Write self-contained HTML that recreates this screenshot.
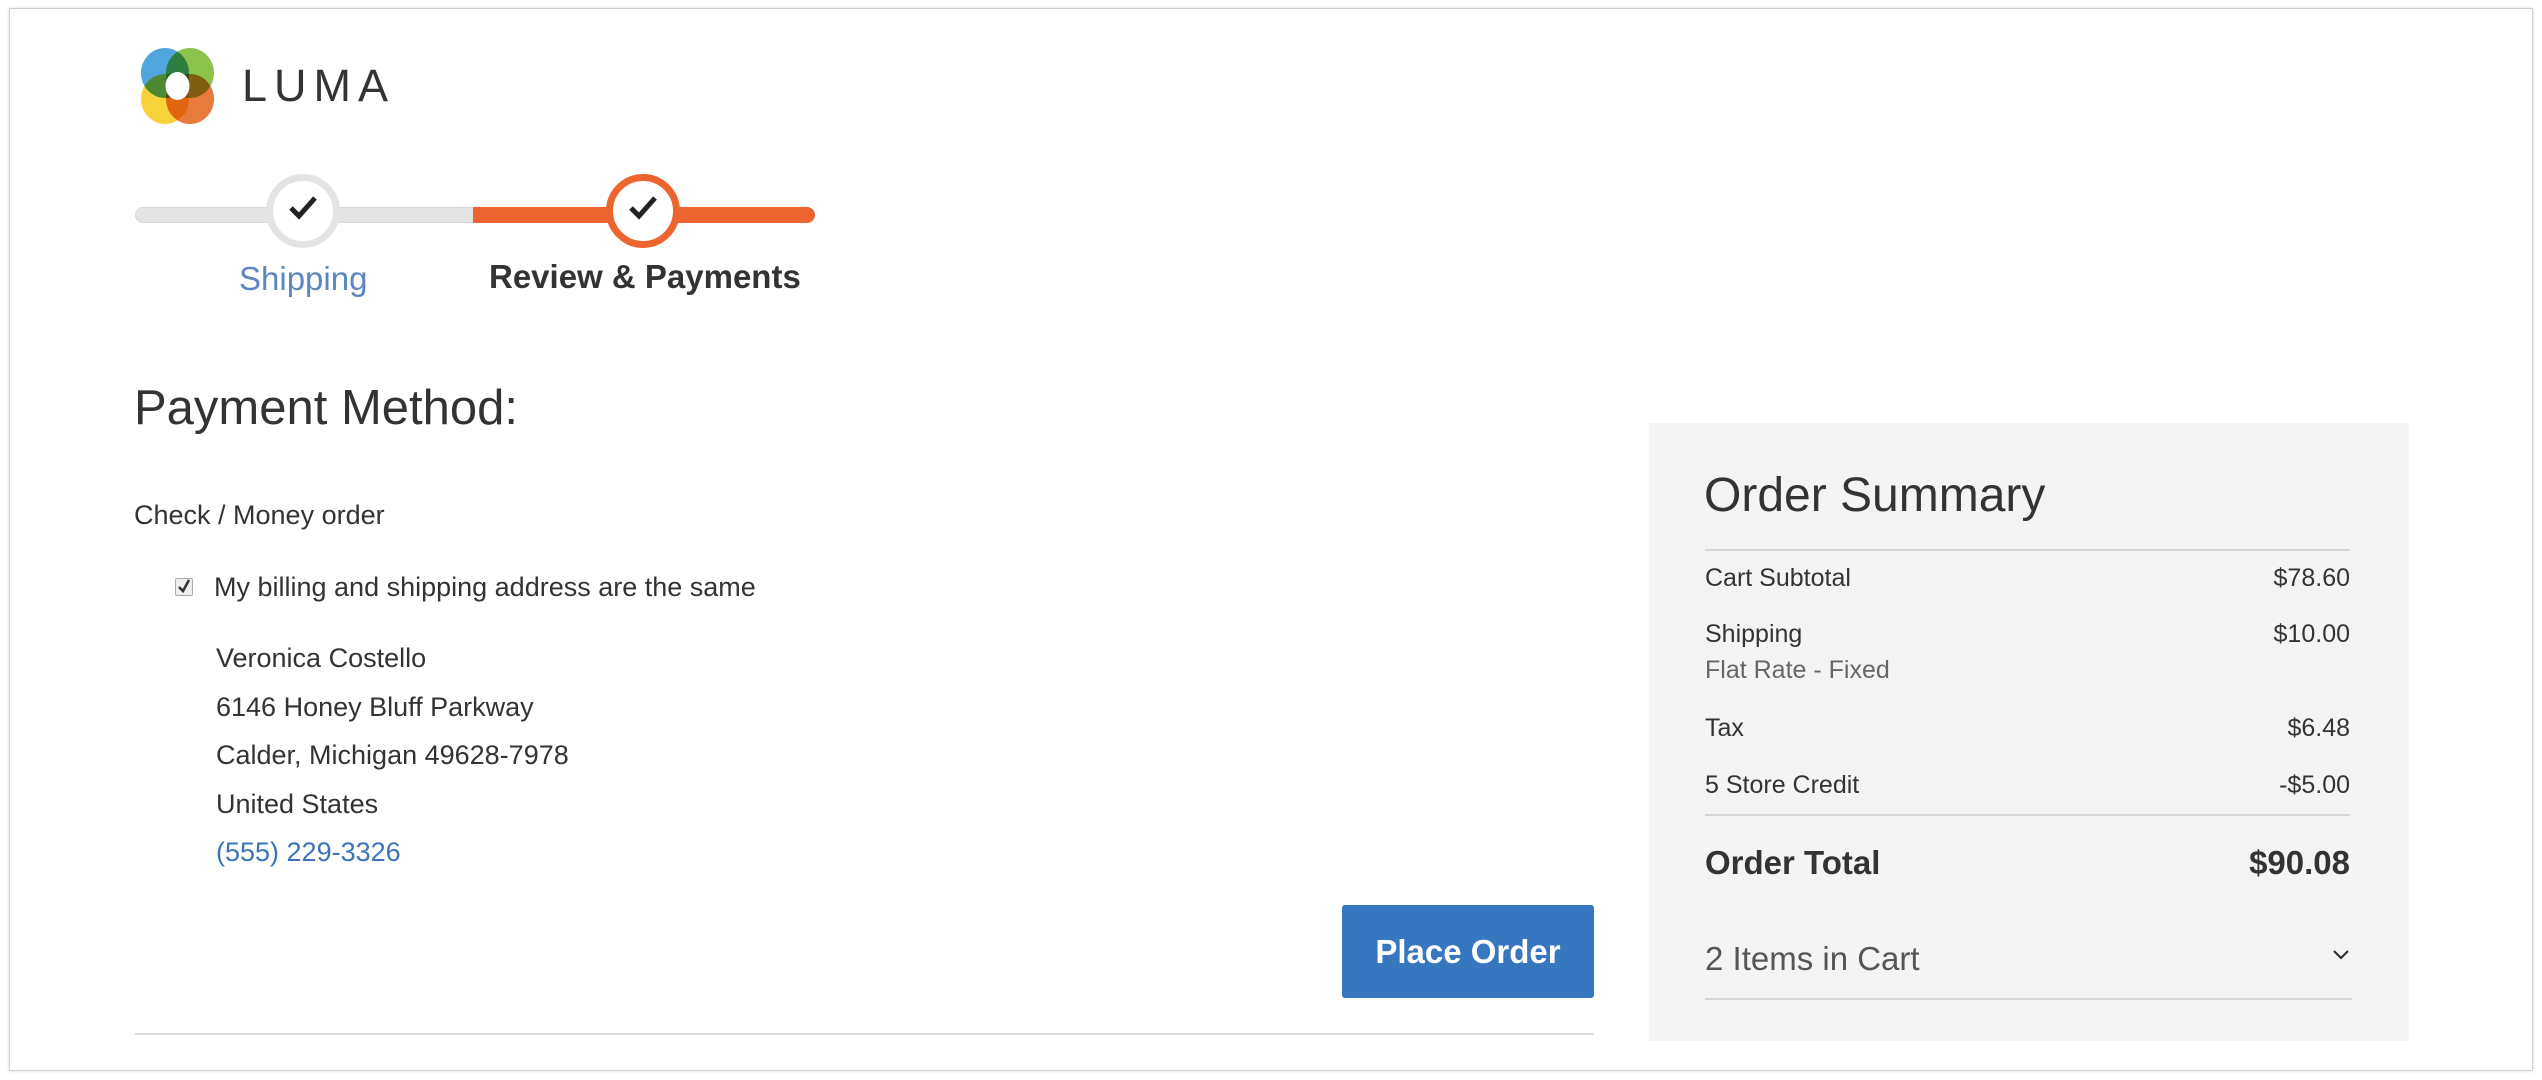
<!DOCTYPE html>
<html><head><meta charset="utf-8"><style>
html,body{margin:0;padding:0;background:#fff;}
body{width:2542px;height:1080px;position:relative;overflow:hidden;font-family:"Liberation Sans",sans-serif;color:#333;}
.frame{position:absolute;left:9px;top:8px;width:2522px;height:1061px;border:1px solid #cfcfcf;box-shadow:0 0 3px rgba(0,0,0,.15);}
.a{position:absolute;white-space:nowrap;}
.bar{position:absolute;height:16px;top:207px;}
.circ{position:absolute;width:60px;height:60px;border-radius:50%;background:#fff;}
.row{position:absolute;left:1705px;width:645px;font-size:25px;color:#333;}
.row span{position:absolute;right:0;top:0;}
.lg{mix-blend-mode:multiply;}
</style></head><body>
<div class="frame"></div>
<svg class="a" style="left:136px;top:46px" width="84" height="80" viewBox="0 0 84 80">
<ellipse class="lg" cx="29" cy="27" rx="24" ry="25" fill="#4fa5dc"/>
<ellipse class="lg" cx="54" cy="27" rx="24" ry="25" fill="#8ec34b"/>
<ellipse class="lg" cx="29" cy="53" rx="24" ry="25" fill="#f8d23a"/>
<ellipse class="lg" cx="54" cy="53" rx="24" ry="25" fill="#e87a3e"/>
<ellipse cx="41.5" cy="40" rx="12" ry="14" fill="#fff"/>
</svg>
<div class="a" style="left:242px;top:60px;font-size:45px;letter-spacing:7px;color:#333;">LUMA</div>

<div class="bar" style="left:135px;width:345px;background:#e4e4e4;border-radius:8px 0 0 8px;border:1px solid #d8d8d8;box-sizing:border-box;"></div>
<div class="bar" style="left:473px;width:342px;background:#ec6530;border-radius:0 8px 8px 0;"></div>
<div class="circ" style="left:266px;top:174px;border:7px solid #e4e4e4;box-sizing:content-box;width:60px;height:60px;"></div>
<div class="circ" style="left:606px;top:174px;border:7px solid #ec6530;box-sizing:content-box;width:60px;height:60px;"></div>
<svg class="a" style="left:288px;top:194px" width="30" height="28" viewBox="0 0 30 28"><path d="M3 14 L11 22 L27 4" fill="none" stroke="#222" stroke-width="5"/></svg>
<svg class="a" style="left:628px;top:194px" width="30" height="28" viewBox="0 0 30 28"><path d="M3 14 L11 22 L27 4" fill="none" stroke="#222" stroke-width="5"/></svg>
<div class="a" style="left:239px;top:260px;font-size:33px;color:#5b86c2;">Shipping</div>
<div class="a" style="left:489px;top:258px;font-size:33px;font-weight:bold;color:#333;">Review &amp; Payments</div>

<div class="a" style="left:134px;top:380px;font-size:49px;color:#333;">Payment Method:</div>
<div class="a" style="left:134px;top:500px;font-size:27px;">Check / Money order</div>
<div class="a" style="left:175px;top:578px;width:16px;height:16px;border:1px solid #aaa;border-radius:2px;background:#eee;"></div>
<svg class="a" style="left:177px;top:578px" width="14" height="16" viewBox="0 0 14 16"><path d="M2 9 L6 13 L12 2" fill="none" stroke="#333" stroke-width="2.5"/></svg>
<div class="a" style="left:214px;top:572px;font-size:27px;">My billing and shipping address are the same</div>
<div class="a" style="left:216px;top:634px;font-size:27px;line-height:48.6px;">Veronica Costello<br>6146 Honey Bluff Parkway<br>Calder, Michigan 49628-7978<br>United States<br><span style="color:#3d73b9">(555) 229-3326</span></div>

<div class="a" style="left:1342px;top:905px;width:252px;height:93px;background:#3677bf;border-radius:3px;color:#fff;font-weight:bold;font-size:33px;text-align:center;line-height:93px;">Place Order</div>
<div class="a" style="left:135px;top:1033px;width:1459px;height:2px;background:#ddd;"></div>

<div class="a" style="left:1649px;top:423px;width:760px;height:618px;background:#f4f4f4;"></div>
<div class="a" style="left:1704px;top:468px;font-size:48px;color:#333;">Order Summary</div>
<div class="a" style="left:1705px;top:549px;width:645px;height:2px;background:#d6d6d6;"></div>
<div class="row" style="top:564px;">Cart Subtotal<span>$78.60</span></div>
<div class="row" style="top:620px;">Shipping<span>$10.00</span></div>
<div class="row" style="top:656px;color:#666;">Flat Rate - Fixed</div>
<div class="row" style="top:714px;">Tax<span>$6.48</span></div>
<div class="row" style="top:771px;">5 Store Credit<span>-$5.00</span></div>
<div class="a" style="left:1705px;top:814px;width:645px;height:2px;background:#d6d6d6;"></div>
<div class="row" style="top:844px;font-size:33px;font-weight:bold;">Order Total<span>$90.08</span></div>
<div class="row" style="top:940px;font-size:33px;color:#555;">2 Items in Cart</div>
<svg class="a" style="left:2331px;top:948px" width="20" height="14" viewBox="0 0 20 14"><path d="M3 3 L10 10 L17 3" fill="none" stroke="#333" stroke-width="2.2"/></svg>
<div class="a" style="left:1705px;top:998px;width:647px;height:2px;background:#d6d6d6;"></div>
</body></html>
